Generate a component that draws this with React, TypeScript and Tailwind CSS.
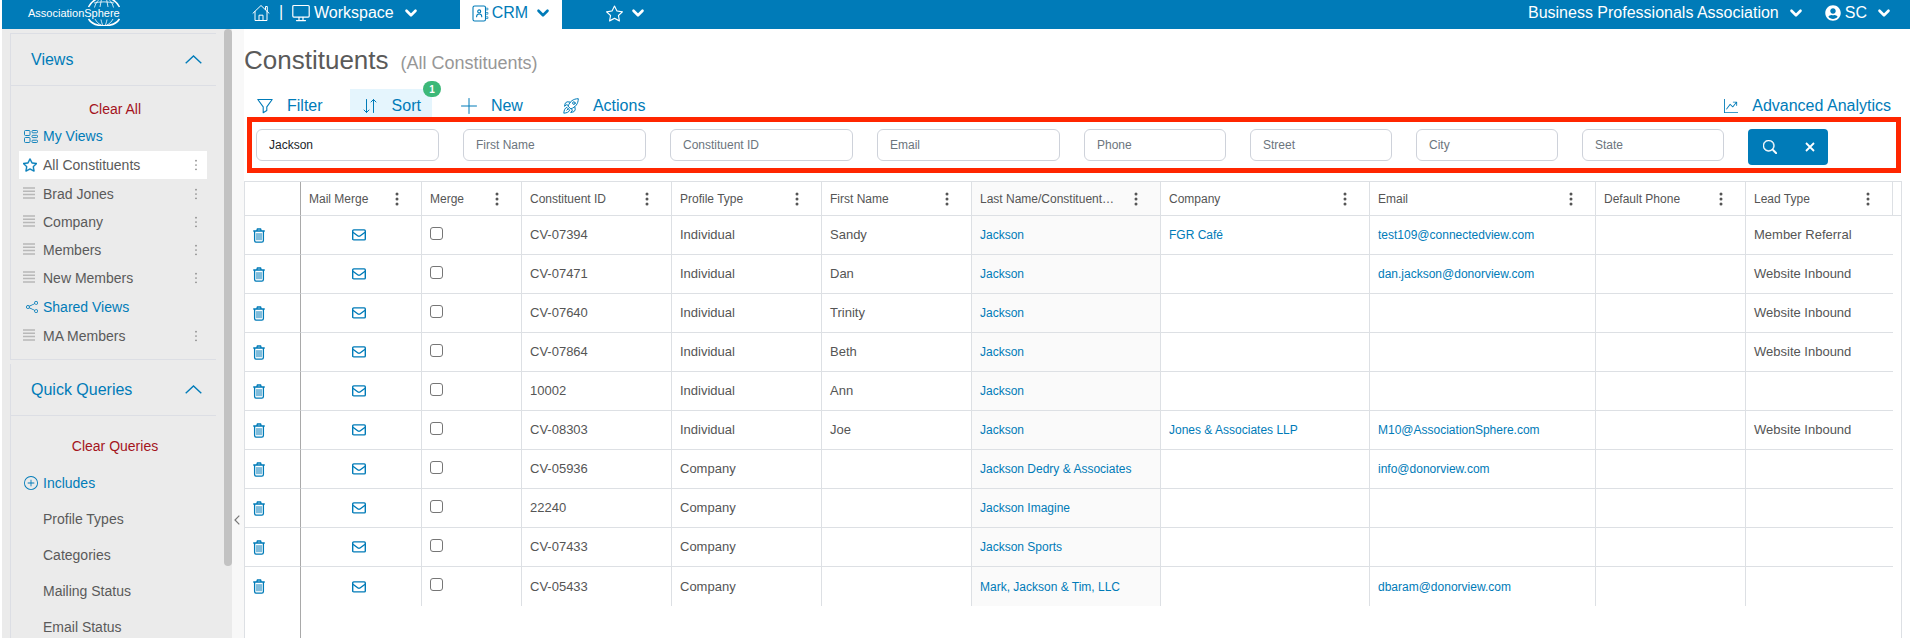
import { type ReactNode } from "react";
import { BsGraphUpArrow, BsPlusCircle, BsSearch, BsShare, BsStar } from "react-icons/bs";
import { FaUserCircle } from "react-icons/fa";
import { ChevronDown } from "lucide-react";

const savedViews = ["Brad Jones", "Company", "Members", "New Members"];
const queryTypes = ["Profile Types", "Categories", "Mailing Status", "Email Status"];

const searchFields = [
  { label: "Last Name", value: "Jackson" },
  { label: "First Name" },
  { label: "Constituent ID" },
  { label: "Email" },
  { label: "Phone" },
  { label: "Street" },
  { label: "City" },
  { label: "State" },
];

interface Constituent {
  id: string;
  type: string;
  first?: string;
  name: string;
  company?: string;
  email?: string;
  lead?: string;
}

const constituents: Constituent[] = [
  { id: "CV-07394", type: "Individual", first: "Sandy", name: "Jackson", company: "FGR Café", email: "test109@connectedview.com", lead: "Member Referral" },
  { id: "CV-07471", type: "Individual", first: "Dan", name: "Jackson", email: "dan.jackson@donorview.com", lead: "Website Inbound" },
  { id: "CV-07640", type: "Individual", first: "Trinity", name: "Jackson", lead: "Website Inbound" },
  { id: "CV-07864", type: "Individual", first: "Beth", name: "Jackson", lead: "Website Inbound" },
  { id: "10002", type: "Individual", first: "Ann", name: "Jackson" },
  { id: "CV-08303", type: "Individual", first: "Joe", name: "Jackson", company: "Jones & Associates LLP", email: "M10@AssociationSphere.com", lead: "Website Inbound" },
  { id: "CV-05936", type: "Company", name: "Jackson Dedry & Associates", email: "info@donorview.com" },
  { id: "22240", type: "Company", name: "Jackson Imagine" },
  { id: "CV-07433", type: "Company", name: "Jackson Sports" },
  { id: "CV-05433", type: "Company", name: "Mark, Jackson & Tim, LLC", email: "dbaram@donorview.com" },
];

const columns = [
  "Mail Merge",
  "Merge",
  "Constituent ID",
  "Profile Type",
  "First Name",
  "Last Name/Constituent…",
  "Company",
  "Email",
  "Default Phone",
  "Lead Type",
];

function HouseIcon() {
  return (
    <svg viewBox="0 0 18 18" className="size-[18px]" fill="none" stroke="currentColor" strokeLinejoin="round" strokeLinecap="round">
      <path d="M1 9.2 9 1.5l8 7.7M3 7.5v9h12v-9M13.5 5.6V2.5h1.8v4.8M7 16.5v-5.3h4v5.3" />
    </svg>
  );
}

function MonitorIcon() {
  return (
    <svg viewBox="0 0 18 18" className="size-[18px]" fill="none" stroke="currentColor" strokeWidth="1.2" strokeLinejoin="round" strokeLinecap="round">
      <rect x=".8" y="1.5" width="16.4" height="11.6" rx="1" />
      <path d="M7 13.3v2.8M11 13.3v2.8M4.5 16.6h9" />
    </svg>
  );
}

function ContactBookIcon() {
  return (
    <svg viewBox="0 0 17 17" className="size-[17px]" fill="none" stroke="currentColor" strokeWidth="1.1" strokeLinecap="round">
      <rect x="1" y="1" width="12.5" height="15" rx="1.6" />
      <circle cx="7.2" cy="6.4" r="1.5" />
      <path d="M4.6 11.8c0-1.900 1.100-2.800 2.600-2.800s2.600.9 2.600 2.800" />
      <path d="M14.2 3.200h1.700v1.700h-1.700M14.200 7.500h1.700v1.700h-1.700M14.200 11.800h1.700v1.700h-1.700" strokeWidth=".7" />
    </svg>
  );
}

function GlobeLogo() {
  return (
    <svg viewBox="0 0 36 36" className="absolute -top-[10px] left-[58px] size-9" fill="none" stroke="currentColor">
      <path d="M2.500 17C6 10.500 11 7.500 18 7.500S30 10.500 33.500 17M2.500 29c5.500 9 25.500 9 31 0" strokeWidth="1.500" />
      <path d="M8.500 17.500c.8-3.500 2.500-6.500 5-8.500M27.500 17.500c-.8-3.500-2.500-6.500-5-8.500M14 17l1.500-8M22 17l-1.500-8M8 13c6-1.500 14-1.500 20 0" strokeWidth=".8" />
      <path d="M9 29c1.500 2.800 3.500 4.800 6 6M27 29c-1.500 2.800-3.500 4.800-6 6M15 29.500c.5 2.500 1 4.500 2 6M21 29.500c-.5 2.500-1 4.500-2 6" strokeWidth=".8" />
    </svg>
  );
}

function FunnelIcon() {
  return (
    <svg viewBox="0 0 16 16" className="size-4" fill="none" stroke="currentColor" strokeWidth="1.1" strokeLinejoin="round">
      <path d="M.8 1.500h14.400L9.800 8.800v3.700l-3.600 2.200V8.800z" />
    </svg>
  );
}

function SortIcon() {
  return (
    <svg viewBox="0 0 16 16" className="size-4" fill="none" stroke="currentColor" strokeWidth="1" strokeLinecap="round" strokeLinejoin="round">
      <path d="M4.500 1.500v13M2 12l2.500 2.500L7 12M11.500 14.500v-13M9 4l2.500-2.500L14 4" />
    </svg>
  );
}

function PlusIcon() {
  return (
    <svg viewBox="0 0 16 16" className="size-4" fill="none" stroke="currentColor" strokeLinecap="round">
      <path d="M8 .5v15M.5 8h15" />
    </svg>
  );
}

function RocketIcon() {
  return (
    <svg viewBox="0 0 16 16" className="size-4" fill="none" stroke="currentColor" strokeWidth="1" strokeLinejoin="round" strokeLinecap="round">
      <path d="M5.200 7.800C7 3.500 10 .8 15.300.7 15.200 6 12.500 9 8.200 10.800zM5.200 7.800 3.900 6.500 1.500 8.300l.8-3.200 1.800-1.300 3.200.3M8.200 10.800l1.300 1.300-1.800 2.400 3.200-.8 1.300-1.800-.3-3.200" />
      <circle cx="10.900" cy="5.100" r="1.300" />
      <path d="M3.500 9.500c-1.600.4-2.400 2.700-2.700 5.700 3-.3 5.300-1.100 5.700-2.700zM3.800 12.200l1.400-1.400" />
    </svg>
  );
}

function ViewsGridIcon() {
  return (
    <svg viewBox="0 0 14 13" className="h-[13px] w-[14px]" fill="none" stroke="currentColor" strokeWidth=".9">
      <rect x=".5" y=".5" width="5.500" height="5" rx="1" />
      <rect x=".5" y="7.500" width="5.500" height="5" rx="1" />
      <rect x="8" y=".5" width="5.500" height="2.300" rx=".8" />
      <rect x="8" y="5.300" width="5.500" height="2.300" rx=".8" />
      <rect x="8" y="10.200" width="5.500" height="2.300" rx=".8" />
    </svg>
  );
}

function LinesIcon() {
  return (
    <svg viewBox="0 0 12 12" className="mb-[3px] size-3 text-[#b8b8b8]" stroke="currentColor" strokeWidth="1.500">
      <path d="M0 1h12M0 4.300h12M0 7.600h12M0 10.900h12" />
    </svg>
  );
}

function TrashIcon() {
  return (
    <svg viewBox="0 0 12 15" className="h-[15px] w-3" fill="none" stroke="currentColor" strokeWidth="1.300" strokeLinecap="round">
      <path d="M.7 3h10.600M3.800 2.700 4.400 1h3.200l.6 1.700M1.600 3.200v9.300c0 1.100.6 1.700 1.600 1.700h5.600c1 0 1.600-.6 1.600-1.700V3.200" />
      <path d="M4 5.500v6.300M6 5.500v6.300M8 5.500v6.300" strokeWidth="1" />
    </svg>
  );
}

function EnvelopeIcon() {
  return (
    <svg viewBox="0 0 14 12" className="h-3 w-[14px]" fill="none" stroke="currentColor" strokeWidth="1.400" strokeLinejoin="round">
      <rect x=".7" y=".9" width="12.600" height="10" rx="1" />
      <path d="M.9 3.300 6 7c.6.4 1.400.4 2 0l5.100-3.700" />
    </svg>
  );
}

function Dots({ small = false }: { small?: boolean }) {
  return (
    <svg viewBox="0 0 4 14" className={small ? "h-3 w-1 text-[#8a8a8a]" : "h-[14px] w-1 text-[#555]"} fill="currentColor">
      <circle cx="2" cy="2" r={small ? 1 : 1.5} />
      <circle cx="2" cy="7" r={small ? 1 : 1.5} />
      <circle cx="2" cy="12" r={small ? 1 : 1.5} />
    </svg>
  );
}

function PanelHeader({ title }: { title: string }) {
  return (
    <button type="button" className="flex h-[52px] w-full items-center justify-between border-b border-[#dcdee4] pr-[14px] pl-5 text-base text-[#007bb8]">
      {title}
      <svg viewBox="0 0 17 9" className="h-[9px] w-[17px]" fill="none" stroke="currentColor" strokeWidth="1.400">
        <path d="M.7 8.300 8.500 1l7.800 7.300" />
      </svg>
    </button>
  );
}

function GroupHeading({ icon, children }: { icon: ReactNode; children: ReactNode }) {
  return (
    <div className="flex h-[30px] items-center text-[#007bb8]">
      <span className="flex w-8 justify-end pr-[5px]">{icon}</span>
      {children}
    </div>
  );
}

function ViewItem({ label, active = false }: { label: string; active?: boolean }) {
  return (
    <div className={active ? "mr-[9px] ml-2 flex h-7 items-center bg-white" : "mr-[9px] ml-2 flex h-7 items-center"}>
      <a href="#" className="flex flex-1 items-center">
        <span className="flex w-6 pl-1">
          {active ? <BsStar className="size-[14px] text-[#007bb8]" strokeWidth="0.5" /> : <LinesIcon />}
        </span>
        {label}
      </a>
      <button type="button" aria-label={`${label} options`} className="px-[9px]">
        <Dots small />
      </button>
    </div>
  );
}

function Sidebar() {
  return (
    <aside className="flex w-[230px] shrink-0 overflow-hidden bg-[#ebebeb] text-sm text-[#5a5a5a]">
      <div className="min-w-0 flex-1 pt-1 pr-2 pl-2">
        <section className="border-y border-l border-[#dcdee4] pb-[9px]">
          <PanelHeader title="Views" />
          <div className="flex h-[35px] items-end justify-center pl-[3px]">
            <button type="button" className="h-6 text-[#a4131c]">Clear All</button>
          </div>
          <GroupHeading icon={<ViewsGridIcon />}>My Views</GroupHeading>
          <ViewItem label="All Constituents" active />
          <div className="pt-px">
            {savedViews.map((view) => (
              <ViewItem key={view} label={view} />
            ))}
          </div>
          <GroupHeading icon={<BsShare className="size-3" />}>Shared Views</GroupHeading>
          <ViewItem label="MA Members" />
        </section>
        <section className="mt-1 border-l border-[#dcdee4]">
          <PanelHeader title="Quick Queries" />
          <div className="flex h-[52px] items-center justify-center pt-2 pl-[3px]">
            <button type="button" className="text-[#a4131c]">Clear Queries</button>
          </div>
          <GroupHeading icon={<BsPlusCircle className="size-[14px]" />}>Includes</GroupHeading>
          <div className="pt-[3px]">
            {queryTypes.map((type) => (
              <a key={type} href="#" className="flex h-9 items-center pl-8">
                {type}
              </a>
            ))}
          </div>
        </section>
      </div>
      <div className="h-[537px] w-2 shrink-0 rounded-full bg-[#c2c2c2]" />
    </aside>
  );
}

function TopBar() {
  return (
    <header className="ml-[2px] flex h-[29px] shrink-0 items-start bg-[#007bb8] pr-[17px] text-base leading-6 text-white">
      <a href="#" className="relative ml-[26px] flex h-[26px] w-[222px] items-center text-[11px]">
        AssociationSphere
        <GlobeLogo />
      </a>
      <nav className="flex items-start">
        <a href="#" aria-label="Home" className="flex h-[26px] items-center pl-[2px]">
          <HouseIcon />
        </a>
        <span className="flex h-6 w-[22px] items-center justify-center">|</span>
        <button type="button" className="flex h-[26px] items-center">
          <MonitorIcon />
          <span className="ml-1 font-medium">Workspace</span>
          <ChevronDown className="ml-2 size-[18px]" strokeWidth={3.5} />
        </button>
        <button type="button" className="ml-10 flex h-[29px] w-[102px] items-start bg-white text-[#007bb8]">
          <span className="flex h-[26px] w-full items-center pl-3">
            <ContactBookIcon />
            <span className="ml-[3px]">CRM</span>
            <ChevronDown className="ml-[6px] size-[18px]" strokeWidth={3.5} />
          </span>
        </button>
        <button type="button" aria-label="Favorites" className="ml-11 flex h-[26px] items-center">
          <BsStar className="size-[17px]" />
          <ChevronDown className="ml-[6px] size-[18px]" strokeWidth={3.5} />
        </button>
      </nav>
      <div className="ml-auto flex h-[26px] items-center">
        <button type="button" className="flex items-center">
          Business Professionals Association
          <ChevronDown className="ml-2 size-[18px]" strokeWidth={3.5} />
        </button>
        <button type="button" className="ml-5 flex items-center">
          <FaUserCircle className="size-4" />
          <span className="ml-1">SC</span>
          <ChevronDown className="ml-2 size-[18px]" strokeWidth={3.5} />
        </button>
      </div>
    </header>
  );
}

function ToolButton({ icon, label, badge }: { icon: ReactNode; label: string; badge?: number }) {
  return (
    <button
      type="button"
      className={badge ? "relative flex h-7 items-center gap-[14px] bg-[#e5f5fd] pt-[6px] pr-[11px] pl-3" : "relative flex h-7 items-center gap-[14px] pt-[6px] pr-[11px] pl-[13px]"}
    >
      {icon}
      {label}
      {badge && (
        <span className="absolute -top-2 -right-[9px] flex h-4 w-[18px] items-center justify-center rounded-full bg-[#3cb878] text-[10px] font-bold text-white">
          {badge}
        </span>
      )}
    </button>
  );
}

function SearchBar() {
  return (
    <form className="mr-[9px] ml-[3px] grid h-14 grid-cols-[repeat(4,183fr)_repeat(4,142fr)_80px] items-start gap-6 border-5 border-[#ff2600] pt-[7px] pr-[68px] pl-1 text-xs">
      {searchFields.map((field) => (
        <input
          key={field.label}
          type="text"
          aria-label={field.label}
          placeholder={field.label}
          defaultValue={field.value}
          className="h-8 w-full min-w-0 rounded-md border border-[#ced2da] bg-white px-3 text-[#212529] placeholder:text-[#6c757d]"
        />
      ))}
      <div className="flex h-9 overflow-hidden rounded bg-[#007bb8] text-white">
        <button type="submit" aria-label="Search" className="flex w-11 items-center justify-center">
          <BsSearch className="size-[14px]" strokeWidth="0.6" />
        </button>
        <button type="reset" aria-label="Clear search" className="flex w-9 items-center justify-center">
          <svg viewBox="0 0 10 10" className="size-[10px]" stroke="currentColor" strokeWidth="1.800">
            <path d="m1 1 8 8M9 1 1 9" />
          </svg>
        </button>
      </div>
    </form>
  );
}

const cell = "border-r border-b border-[#dde0e4] px-2 truncate";

function ConstituentTable() {
  return (
    <div className="mt-2 mr-2 flex-1 overflow-hidden border-x border-t border-[#dde0e4] text-xs text-[#555]">
      <table className="h-full w-full table-fixed border-separate border-spacing-0 text-left">
        <colgroup>
          <col className="w-14" />
          <col className="w-[121px]" />
          <col className="w-[100px]" />
          <col className="w-[150px]" />
          <col className="w-[150px]" />
          <col className="w-[150px]" />
          <col className="w-[189px]" />
          <col className="w-[209px]" />
          <col className="w-[226px]" />
          <col className="w-[150px]" />
          <col className="w-[147px]" />
          <col className="w-2" />
        </colgroup>
        <thead>
          <tr className="h-[34px]">
            <th aria-label="Delete" className="border-r border-b border-r-[#a9a9a9] border-b-[#dde0e4]" />
            {columns.map((column, i) => (
              <th
                key={column}
                className={i === 5 ? "border-r border-b border-[#dde0e4] bg-[#fafafa] pr-[22px] pl-2 font-normal" : "border-r border-b border-[#dde0e4] pr-[22px] pl-2 font-normal last:pr-5"}
              >
                <div className="flex items-center justify-between gap-2">
                  <span className="whitespace-nowrap">{column}</span>
                  <button type="button" aria-label={`${column} menu`} className="shrink-0">
                    <Dots />
                  </button>
                </div>
              </th>
            ))}
            <th aria-hidden="true" className="border-b border-[#dde0e4]" />
          </tr>
        </thead>
        <tbody className="[&>tr:nth-last-child(2)>td]:border-b-0">
          {constituents.map((row) => (
            <tr key={row.id} className="h-[39px]">
              <td className="border-r border-b border-r-[#a9a9a9] border-b-[#dde0e4] px-2 text-[#007bb8]">
                <button type="button" aria-label={`Delete ${row.id}`} className="block">
                  <TrashIcon />
                </button>
              </td>
              <td className="border-r border-b border-[#dde0e4] pr-3 pl-2 text-[#007bb8]">
                <button type="button" aria-label={`Email ${row.name}`} className="mx-auto block">
                  <EnvelopeIcon />
                </button>
              </td>
              <td className={cell}>
                <input
                  type="checkbox"
                  aria-label={`Merge ${row.id}`}
                  className="mb-1 block size-[13px] appearance-none rounded-[3px] border border-[#767676] bg-white"
                />
              </td>
              <td className={`${cell} text-[13px]`}>{row.id}</td>
              <td className={`${cell} text-[13px]`}>{row.type}</td>
              <td className={`${cell} text-[13px]`}>{row.first}</td>
              <td className={`${cell} bg-[#fafafa] text-[#007bb8]`}>
                <a href="#">{row.name}</a>
              </td>
              <td className={`${cell} text-[#007bb8]`}>{row.company && <a href="#">{row.company}</a>}</td>
              <td className={`${cell} text-[#007bb8]`}>{row.email && <a href={`mailto:${row.email}`}>{row.email}</a>}</td>
              <td className={cell} />
              <td className="truncate border-b border-[#dde0e4] px-2 text-[13px]">{row.lead}</td>
            </tr>
          ))}
          {/* keeps the pinned column divider running to the bottom of the grid */}
          <tr aria-hidden="true">
            <td className="border-r border-[#a9a9a9]" />
          </tr>
        </tbody>
      </table>
    </div>
  );
}

export default function App() {
  return (
    <div className="flex h-screen flex-col overflow-hidden bg-white font-['Liberation_Sans',Arial,sans-serif]">
      <TopBar />
      <div className="flex min-h-0 flex-1 pl-[2px]">
        <Sidebar />
        <button type="button" aria-label="Collapse sidebar" className="flex w-3 shrink-0 bg-[#f8f8f8] pt-[486px] pl-[2px] text-[#777]">
          <svg viewBox="0 0 6 10" className="h-[10px] w-[6px]" fill="none" stroke="currentColor" strokeWidth="1.200">
            <path d="M5.300.7 1 5l4.300 4.300" />
          </svg>
        </button>
        <main className="flex min-w-0 flex-1 flex-col">
          <div className="flex h-[60px] shrink-0 items-baseline gap-3 pt-[15px] text-[26px] leading-8 text-[#5a5a5a]">
            <h1>Constituents</h1>
            <span className="text-lg text-[#979797]">(All Constituents)</span>
          </div>
          <div className="flex shrink-0 gap-4 pr-[19px] text-base text-[#007bb8]">
            <ToolButton icon={<FunnelIcon />} label="Filter" />
            <ToolButton icon={<SortIcon />} label="Sort" badge={1} />
            <ToolButton icon={<PlusIcon />} label="New" />
            <ToolButton icon={<RocketIcon />} label="Actions" />
            <a href="#" className="ml-auto flex h-7 items-center gap-[14px] pt-[6px]">
              <BsGraphUpArrow className="size-[14px]" />
              Advanced Analytics
            </a>
          </div>
          <SearchBar />
          <ConstituentTable />
        </main>
      </div>
    </div>
  );
}
